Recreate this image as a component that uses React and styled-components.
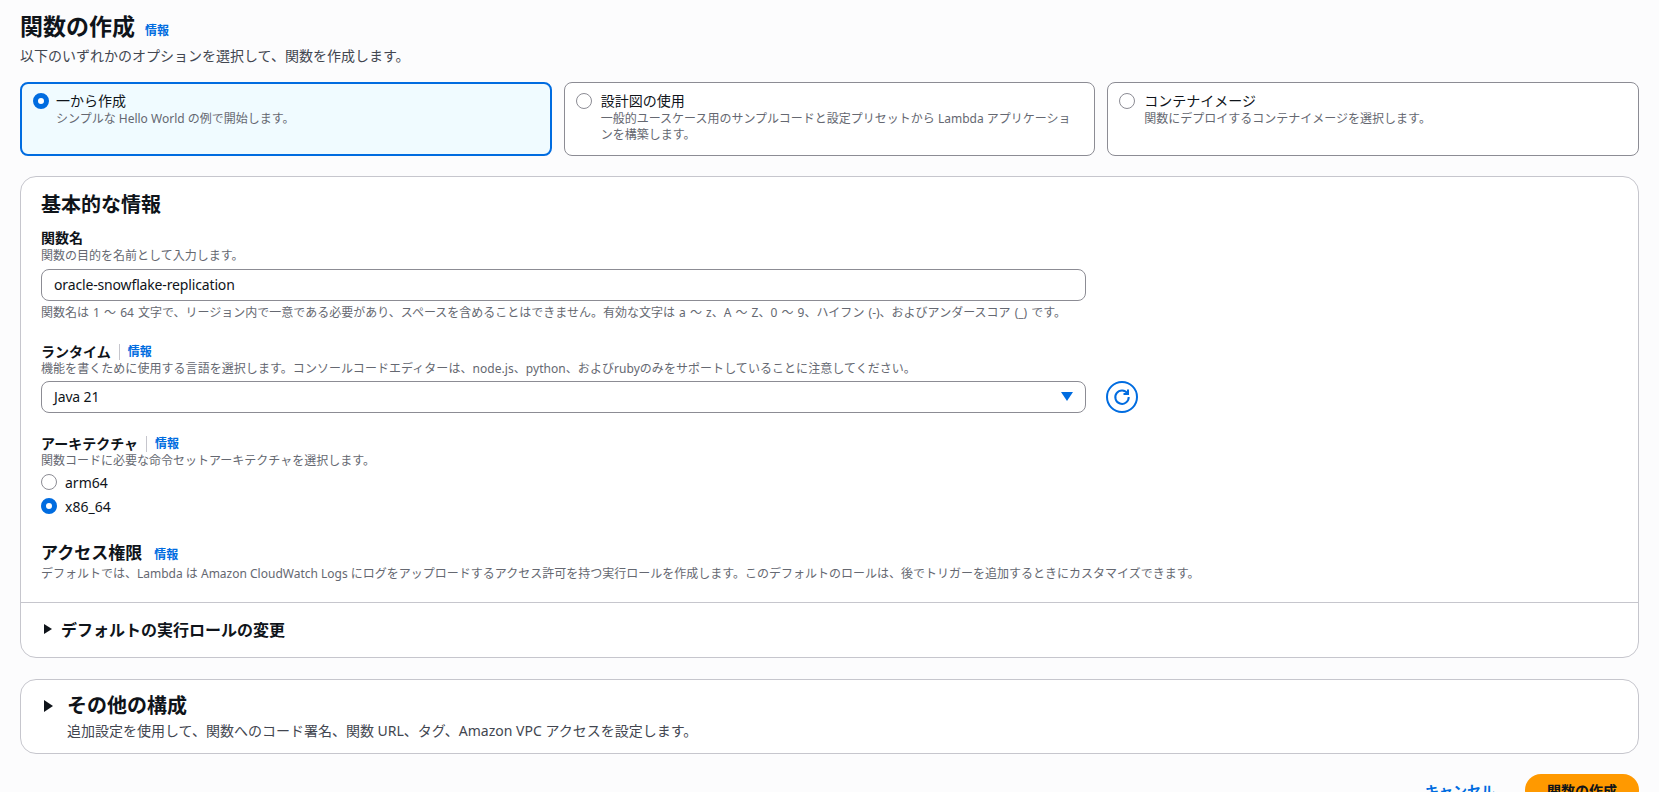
import React from 'react';
import styled, { createGlobalStyle } from 'styled-components';

const GlobalStyle = createGlobalStyle`
  html, body {
    margin: 0;
    padding: 0;
    height: 792px;
    overflow: hidden;
    background: #fcfcfd;
  }
  body {
    font-family: "Noto Sans", "Noto Sans CJK JP", sans-serif;
    color: #0f141a;
    font-size: 14px;
  }
`;

const Page = styled.div`
  padding: 10px 20px 0;
  width: 1619px;
`;

const Header = styled.div`
  display: flex;
  align-items: baseline;
  gap: 10px;
  height: 36px;
`;

const Title = styled.h1`
  margin: 0;
  font-size: 23px;
  line-height: 32px;
  font-weight: 700;
`;

const Info = styled.a`
  color: #006ce0;
  font-size: 12px;
  font-weight: 700;
  line-height: 18px;
`;

const PageDesc = styled.p`
  margin: 0;
  font-size: 14px;
  line-height: 20px;
  color: #424650;
`;

const Tiles = styled.div`
  display: grid;
  grid-template-columns: repeat(3, 1fr);
  gap: 12px;
  margin-top: 16px;
`;

const Tile = styled.div`
  display: flex;
  gap: ${(p) => (p.$on ? '7px' : '9px')};
  height: 74px;
  box-sizing: border-box;
  padding: ${(p) => (p.$on ? '7px 20px 7px 11px' : '8px 20px 8px 11px')};
  border-radius: 8px;
  background: ${(p) => (p.$on ? '#f0fbff' : '#fff')};
  border: ${(p) => (p.$on ? '2px solid #006ce0' : '1px solid #8c8c94')};
`;

const Radio = styled.span`
  flex: none;
  width: 16px;
  height: 16px;
  margin-top: 2px;
  box-sizing: border-box;
  border-radius: 50%;
  background: #fff;
  border: ${(p) => (p.$on ? '5px solid #006ce0' : '1.5px solid #8c8c94')};
`;

const TileTitle = styled.div`
  font-size: 14px;
  line-height: 20px;
`;

const SmallText = styled.div`
  font-size: 12px;
  line-height: 16px;
  color: #656871;
  letter-spacing: ${(p) => p.$track || 0}px;
  word-spacing: ${(p) => p.$words || 0}px;
`;

const Panel = styled.div`
  margin-top: 20px;
  background: #fff;
  border: 1px solid #c6c6cd;
  border-radius: 16px;
  overflow: hidden;
`;

const PanelBody = styled.div`
  padding: 14px 20px 20px;
`;

const PanelTitle = styled.h2`
  margin: 0 0 10px;
  font-size: 20px;
  line-height: 28px;
  font-weight: 700;
`;

const Field = styled.div`
  margin-bottom: ${(p) => p.$gap || 0}px;
`;

const LabelRow = styled.div`
  display: flex;
  align-items: center;
  height: 18px;
`;

const Label = styled.label`
  display: block;
  font-size: 14px;
  font-weight: 700;
  line-height: 18px;
  margin-bottom: ${(p) => p.$below || 0}px;
`;

const LabelInfo = styled(Info)`
  margin-left: 8px;
  padding-left: 8px;
  border-left: 1px solid #c6c6cd;
  line-height: 16px;
`;

const InputBox = styled.div`
  width: 1045px;
  height: 32px;
  margin: 5px 0 4px;
  box-sizing: border-box;
  display: flex;
  align-items: center;
  justify-content: space-between;
  padding: 0 12px 1px;
  border: 1px solid #8c8c94;
  border-radius: 8px;
  background: #fff;
  font-size: 14px;
  letter-spacing: -0.15px;
`;

const SelectRow = styled.div`
  display: flex;
  align-items: center;
  gap: 20px;
  margin-top: -1px;
`;

const Caret = styled.svg`
  width: 12px;
  height: 9px;
  fill: #006ce0;
`;

const RefreshButton = styled.button`
  width: 32px;
  height: 32px;
  padding: 0;
  display: flex;
  align-items: center;
  justify-content: center;
  background: #fff;
  border: 2px solid #006ce0;
  border-radius: 50%;
`;

const RadioList = styled.div`
  margin-top: 1px;
`;

const RadioRow = styled.div`
  display: flex;
  align-items: center;
  gap: 8px;
  height: 24px;
  & > span {
    margin-top: 0;
  }
`;

const SectionTitle = styled.div`
  display: flex;
  align-items: baseline;
  gap: 12px;
  margin-bottom: 1px;
  font-size: 17px;
  font-weight: 700;
  line-height: 24px;
`;

const Expander = styled.div`
  display: flex;
  align-items: center;
  gap: 9px;
  height: 55px;
  box-sizing: border-box;
  padding: 0 23px 2px;
  border-top: 1px solid #c6c6cd;
  font-size: 16px;
  font-weight: 700;
`;

const Triangle = styled.span`
  flex: none;
  width: 0;
  height: 0;
  border-style: solid;
  border-width: ${(p) => (p.$big ? '6px 0 6px 9px' : '5px 0 5px 8px')};
  border-color: transparent transparent transparent #0f141a;
`;

const ExpanderPanel = styled.div`
  margin-top: 21px;
  height: 75px;
  box-sizing: border-box;
  padding: 12px 23px;
  display: flex;
  align-items: flex-start;
  gap: 14px;
  background: #fff;
  border: 1px solid #c6c6cd;
  border-radius: 16px;
`;

const ExpanderTitle = styled.div`
  font-size: 20px;
  font-weight: 700;
  line-height: 28px;
`;

const ExpanderDesc = styled.div`
  margin-top: 1px;
  font-size: 14px;
  line-height: 20px;
  color: #424650;
`;

const ArrowWrap = styled.div`
  height: 28px;
  display: flex;
  align-items: center;
`;

const Footer = styled.div`
  display: flex;
  justify-content: flex-end;
  align-items: center;
  gap: 30px;
  margin-top: 20px;
`;

const CancelLink = styled.a`
  color: #006ce0;
  font-size: 14px;
  font-weight: 700;
`;

const PrimaryButton = styled.button`
  height: 32px;
  padding: 0 22px;
  background: #ff9900;
  color: #0f141a;
  border: none;
  border-radius: 16px;
  font-family: inherit;
  font-size: 14px;
  font-weight: 700;
`;

const App = () => {
  return (
    <Page>
      <GlobalStyle />
      <Header>
        <Title>関数の作成</Title>
        <Info>情報</Info>
      </Header>
      <PageDesc>以下のいずれかのオプションを選択して、関数を作成します。</PageDesc>

      <Tiles>
        <Tile $on>
          <Radio $on />
          <div>
            <TileTitle>一から作成</TileTitle>
            <SmallText>シンプルな Hello World の例で開始します。</SmallText>
          </div>
        </Tile>
        <Tile>
          <Radio />
          <div>
            <TileTitle>設計図の使用</TileTitle>
            <SmallText>一般的ユースケース用のサンプルコードと設定プリセットから Lambda アプリケーションを構築します。</SmallText>
          </div>
        </Tile>
        <Tile>
          <Radio />
          <div>
            <TileTitle>コンテナイメージ</TileTitle>
            <SmallText>関数にデプロイするコンテナイメージを選択します。</SmallText>
          </div>
        </Tile>
      </Tiles>

      <Panel>
        <PanelBody>
          <PanelTitle>基本的な情報</PanelTitle>

          <Field $gap={22}>
            <Label $below={1}>関数名</Label>
            <SmallText>関数の目的を名前として入力します。</SmallText>
            <InputBox>oracle-snowflake-replication</InputBox>
            <SmallText $words={1}>関数名は 1 ～ 64 文字で、リージョン内で一意である必要があり、スペースを含めることはできません。有効な文字は a ～ z、A ～ Z、0 ～ 9、ハイフン (-)、およびアンダースコア (_) です。</SmallText>
          </Field>

          <Field $gap={18}>
            <LabelRow>
              <Label>ランタイム</Label>
              <LabelInfo>情報</LabelInfo>
            </LabelRow>
            <SmallText $track={0.05}>機能を書くために使用する言語を選択します。コンソールコードエディターは、node.js、python、およびrubyのみをサポートしていることに注意してください。</SmallText>
            <SelectRow>
              <InputBox>
                Java 21
                <Caret viewBox="0 0 12 9"><path d="M0 0h12L6 9z" /></Caret>
              </InputBox>
              <RefreshButton>
                <svg width="18" height="18" viewBox="0 0 18 18" fill="none" stroke="#006ce0" strokeWidth="2">
                  <path d="M14.6 5.5A6.7 6.7 0 1 0 15.7 9" />
                  <path d="M15 1.5v4.5h-4.5" />
                </svg>
              </RefreshButton>
            </SelectRow>
          </Field>

          <Field $gap={23}>
            <LabelRow>
              <Label>アーキテクチャ</Label>
              <LabelInfo>情報</LabelInfo>
            </LabelRow>
            <SmallText>関数コードに必要な命令セットアーキテクチャを選択します。</SmallText>
            <RadioList>
              <RadioRow><Radio />arm64</RadioRow>
              <RadioRow><Radio $on />x86_64</RadioRow>
            </RadioList>
          </Field>

          <SectionTitle>
            アクセス権限
            <Info>情報</Info>
          </SectionTitle>
          <SmallText>デフォルトでは、Lambda は Amazon CloudWatch Logs にログをアップロードするアクセス許可を持つ実行ロールを作成します。このデフォルトのロールは、後でトリガーを追加するときにカスタマイズできます。</SmallText>
        </PanelBody>
        <Expander>
          <Triangle />
          デフォルトの実行ロールの変更
        </Expander>
      </Panel>

      <ExpanderPanel>
        <ArrowWrap><Triangle $big /></ArrowWrap>
        <div>
          <ExpanderTitle>その他の構成</ExpanderTitle>
          <ExpanderDesc>追加設定を使用して、関数へのコード署名、関数 URL、タグ、Amazon VPC アクセスを設定します。</ExpanderDesc>
        </div>
      </ExpanderPanel>

      <Footer>
        <CancelLink>キャンセル</CancelLink>
        <PrimaryButton>関数の作成</PrimaryButton>
      </Footer>
    </Page>
  );
};

export default App;
